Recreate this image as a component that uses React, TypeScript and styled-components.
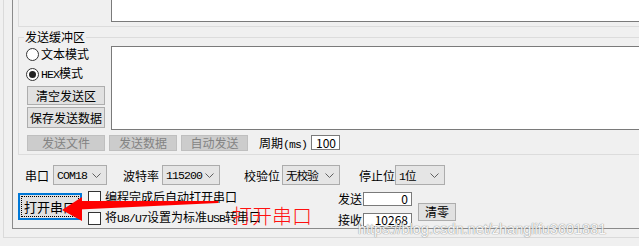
import React from "react";
import styled, { createGlobalStyle } from "styled-components";

const GlobalStyle = createGlobalStyle`
    html, body {
        margin: 0;
        padding: 0;
        background: #f0f0f0;
    }
    body {
        width: 639px;
        height: 246px;
        overflow: hidden;
        font-family: "Noto Sans CJK SC", "Noto Sans", sans-serif;
        font-size: 12px;
        color: #000;
    }
`;

// latin runs in the old dialog font are half-width, about 6px a glyph
const Latin = styled.span`
    font-family: "Liberation Mono", monospace;
    font-size: 11.5px;
    letter-spacing: -0.9px;
`;

const Window = styled.div`
    position: relative;
    width: 639px;
    height: 246px;
    box-sizing: border-box;
    padding-left: 3px;
    overflow: hidden;
`;
const Outer = styled.div`
    height: 238px;
    box-sizing: border-box;
    border-left: 1px solid #dadada;
    border-bottom: 1px solid #dadada;
    padding-left: 8px;
`;
const Panel = styled.div`
    height: 229px;
    box-sizing: border-box;
    border-left: 1px solid #8a8a8a;
    border-bottom: 1px solid #8a8a8a;
    display: flex;
    flex-direction: column;
`;
const ReceiveGroup = styled.div`
    margin-left: 5px;
    height: 30px;
    box-sizing: border-box;
    border-left: 1px solid #dcdcdc;
    border-bottom: 1px solid #dcdcdc;
`;
const TextBox = styled.div<{ $h: number }>`
    height: ${(p) => p.$h}px;
    box-sizing: border-box;
    background: #fff;
    border: 1px solid #7a7a7a;
    border-right: none;
`;
const ReceiveBox = styled(TextBox)`
    margin-left: 92px;
    border-top: none;
`;
const SendGroup = styled.fieldset`
    margin: 3px 0 0 5px;
    padding: 0 0 3px 5px;
    border: 1px solid #dcdcdc;
    border-right: none;
    min-width: 0;
`;
const Legend = styled.legend`
    padding: 0 1px;
    font-size: 12px;
    line-height: 14px;
    height: 14px;
`;
const SendBody = styled.div`
    display: grid;
    grid-template-columns: 80px 1fr;
    column-gap: 5px;
    margin-top: 2px;
    padding-left: 2px;
`;
const LeftCol = styled.div`
    display: flex;
    flex-direction: column;
    align-items: flex-start;
`;
const OptionRow = styled.label<{ $mt: number }>`
    display: flex;
    align-items: center;
    height: 14px;
    margin-top: ${(p) => p.$mt}px;
    gap: 2px;
    line-height: 14px;
`;
const Radio = styled.span<{ $on?: boolean }>`
    width: 13px;
    height: 13px;
    box-sizing: border-box;
    border: 1px solid #333;
    border-radius: 50%;
    background: #fff;
    display: flex;
    align-items: center;
    justify-content: center;
    &::after {
        content: "";
        display: ${(p) => (p.$on ? "block" : "none")};
        width: 7px;
        height: 7px;
        border-radius: 50%;
        background: #222;
    }
`;
const Button = styled.div<{ $w: number; $h: number; $mt?: number }>`
    width: ${(p) => p.$w}px;
    height: ${(p) => p.$h}px;
    margin-top: ${(p) => p.$mt || 0}px;
    box-sizing: border-box;
    background: #e1e1e1;
    border: 1px solid #adadad;
    display: flex;
    align-items: center;
    justify-content: center;
    line-height: 1;
    white-space: nowrap;
`;
const SideButton = styled(Button)`
    margin-left: 1px;
`;
const DisabledButton = styled(Button)`
    background: #cccccc;
    border-color: #bfbfbf;
    color: #838383;
`;
const ActionRow = styled.div`
    display: flex;
    align-items: center;
    gap: 4px;
    margin-top: 4px;
    padding-left: 3px;
`;
const PeriodLabel = styled.span`
    margin-left: 7px;
    white-space: nowrap;
`;
const SmallInput = styled.div<{ $w: number }>`
    width: ${(p) => p.$w}px;
    height: 15px;
    box-sizing: border-box;
    background: #fff;
    border: 1px solid #7a7a7a;
    text-align: right;
    padding-right: 3px;
    line-height: 13px;
    font-size: 12px;
`;
const PortRow = styled.div`
    display: flex;
    align-items: center;
    height: 20px;
    margin-top: 10px;
    padding-left: 12px;
`;
const FieldLabel = styled.span<{ $ml: number }>`
    margin-left: ${(p) => p.$ml}px;
    white-space: nowrap;
`;
const Select = styled.div<{ $w: number; $ml: number }>`
    width: ${(p) => p.$w}px;
    margin-left: ${(p) => p.$ml}px;
    height: 20px;
    box-sizing: border-box;
    background: #e5e5e5;
    border: 1px solid #acacac;
    display: flex;
    align-items: center;
    justify-content: space-between;
    padding: 0 5px 0 3px;
    white-space: nowrap;
`;
const SelectValue = styled.span`
    font-family: "Liberation Mono", "Noto Sans CJK SC", monospace;
    font-size: 11.5px;
    letter-spacing: -0.9px;
`;
const BottomRow = styled.div`
    display: flex;
    align-items: flex-start;
    margin-top: 5px;
    padding-left: 5px;
`;
const OpenButton = styled.div`
    position: relative;
    width: 64px;
    height: 27px;
    margin-top: 3px;
    box-sizing: border-box;
    background: #e1e1e1;
    border: 2px solid #0078d7;
    display: flex;
    align-items: center;
    justify-content: center;
    font-size: 13px;
    &::after {
        content: "";
        position: absolute;
        inset: 1px;
        border: 1px dotted #000;
    }
`;
const Checks = styled.div`
    width: 250px;
    margin-left: 6px;
    display: flex;
    flex-direction: column;
    gap: 7px;
`;
const CheckRow = styled.label`
    display: flex;
    align-items: center;
    gap: 4px;
    height: 14px;
    white-space: nowrap;
    line-height: 14px;
`;
const CheckBox = styled.span`
    width: 13px;
    height: 13px;
    box-sizing: border-box;
    border: 1px solid #333;
    background: #fff;
`;
const Counters = styled.div`
    display: grid;
    grid-template-columns: 25px 49px;
    row-gap: 4px;
    align-items: center;
`;
const CounterBox = styled(SmallInput)`
    height: 14px;
    line-height: 12px;
`;
const ClearButton = styled(Button)`
    margin-left: 6px;
`;
const Overlay = styled.svg`
    position: absolute;
    left: 0;
    top: 0;
    pointer-events: none;
`;
const Note = styled.span`
    position: absolute;
    left: 232px;
    top: 205px;
    font-size: 20px;
    font-weight: 300;
    line-height: 22px;
    color: #ff1010;
    white-space: nowrap;
`;
const Watermark = styled.span`
    position: absolute;
    left: 358px;
    top: 221px;
    font-family: "Liberation Sans", Arial, sans-serif;
    font-size: 14.5px;
    line-height: 16px;
    color: #fafafa;
    text-shadow: 0 0 1px #777, 0 0 1px #888;
    opacity: 0.85;
    white-space: nowrap;
`;

const Chevron = () => (
    <svg width="9" height="5" viewBox="0 0 9 5">
        <polyline points="0.5,0.5 4.5,4.5 8.5,0.5" fill="none" stroke="#606060" strokeWidth="1" />
    </svg>
);

const selects = [
    { label: "串口", ml: 0, gap: 4, w: 54, value: "COM18" },
    { label: "波特率", ml: 16, gap: 3, w: 58, value: "115200" },
    { label: "校验位", ml: 24, gap: 2, w: 58, value: "无校验" },
    { label: "停止位", ml: 19, gap: 0, w: 50, value: "1位" },
];

export default function App() {
    return (
        <Window>
            <GlobalStyle />
            <Outer>
                <Panel>
                    <ReceiveGroup>
                        <ReceiveBox $h={22} />
                    </ReceiveGroup>
                    <SendGroup>
                        <Legend>发送缓冲区</Legend>
                        <SendBody>
                            <LeftCol>
                                <OptionRow $mt={1}>
                                    <Radio />
                                    文本模式
                                </OptionRow>
                                <OptionRow $mt={6}>
                                    <Radio $on />
                                    <span>
                                        <Latin>HEX</Latin>模式
                                    </span>
                                </OptionRow>
                                <SideButton $w={78} $h={19} $mt={5}>
                                    清空发送区
                                </SideButton>
                                <SideButton $w={78} $h={21} $mt={2}>
                                    保存发送数据
                                </SideButton>
                            </LeftCol>
                            <TextBox $h={84} />
                        </SendBody>
                        <ActionRow>
                            <DisabledButton $w={78} $h={16}>发送文件</DisabledButton>
                            <DisabledButton $w={68} $h={16}>发送数据</DisabledButton>
                            <DisabledButton $w={67} $h={16}>自动发送</DisabledButton>
                            <PeriodLabel>
                                周期<Latin>(ms)</Latin>
                            </PeriodLabel>
                            <SmallInput $w={29}>100</SmallInput>
                        </ActionRow>
                    </SendGroup>
                    <PortRow>
                        {selects.map((s) => (
                            <React.Fragment key={s.label}>
                                <FieldLabel $ml={s.ml}>{s.label}</FieldLabel>
                                <Select $w={s.w} $ml={s.gap}>
                                    <SelectValue>{s.value}</SelectValue>
                                    <Chevron />
                                </Select>
                            </React.Fragment>
                        ))}
                    </PortRow>
                    <BottomRow>
                        <OpenButton>打开串口</OpenButton>
                        <Checks>
                            <CheckRow>
                                <CheckBox />
                                编程完成后自动打开串口
                            </CheckRow>
                            <CheckRow>
                                <CheckBox />
                                <span>
                                    将<Latin>U8/U7</Latin>设置为标准<Latin>USB</Latin>转串口
                                </span>
                            </CheckRow>
                        </Checks>
                        <Counters>
                            <span>发送</span>
                            <CounterBox $w={49}>0</CounterBox>
                            <span>接收</span>
                            <CounterBox $w={49}>10268</CounterBox>
                        </Counters>
                        <ClearButton $w={38} $h={18} $mt={13}>清零</ClearButton>
                    </BottomRow>
                </Panel>
            </Outer>
            <Overlay width="639" height="246" viewBox="0 0 639 246">
                <polygon points="79,201 218,201 218,203 79,209.5" fill="#ff0000" />
                <polygon points="62,210 82,197 82,221" fill="#ff0000" />
            </Overlay>
            <Note>打开串口</Note>
            <Watermark>https://blog.csdn.net/zhanglifu3601881</Watermark>
        </Window>
    );
}
